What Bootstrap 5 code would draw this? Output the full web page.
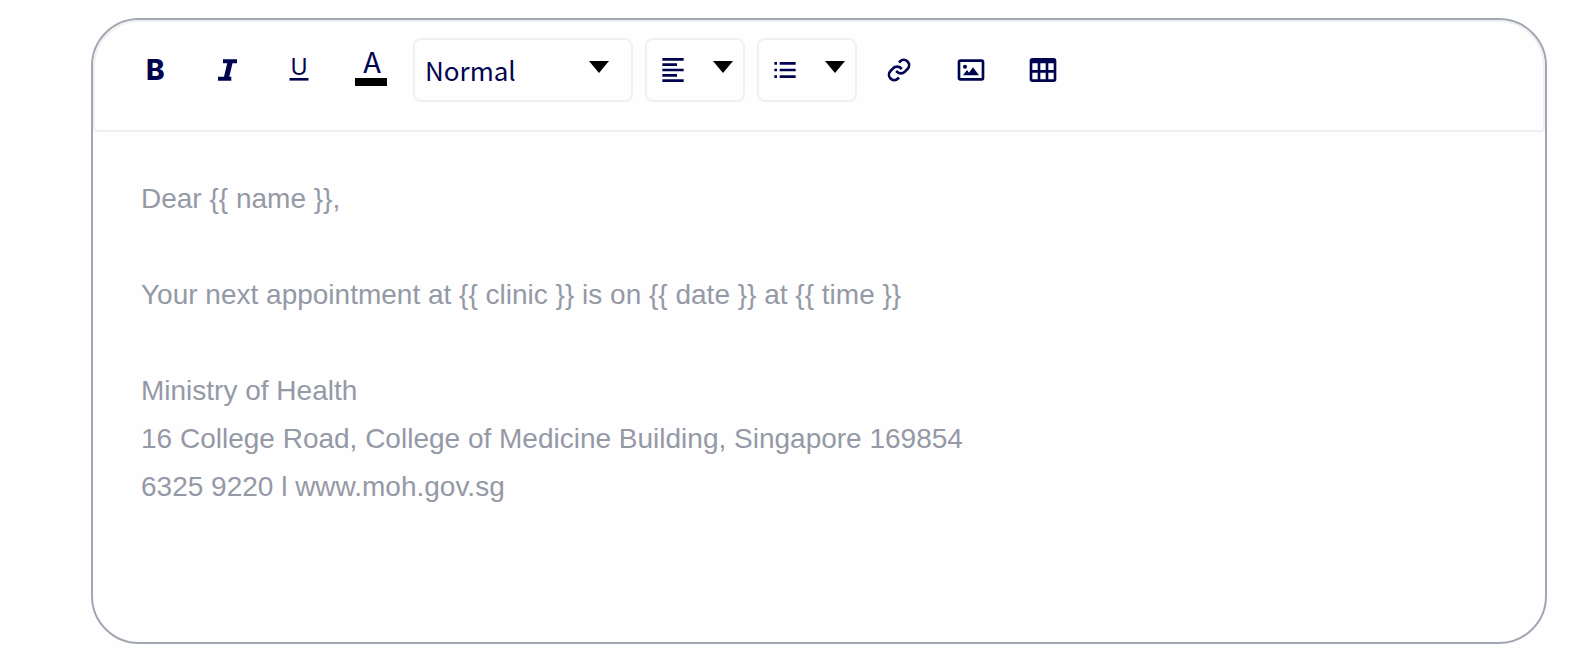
<!DOCTYPE html>
<html lang="en">
<head>
<meta charset="utf-8">
<meta name="viewport" content="width=device-width, initial-scale=1">
<title>Message template editor</title>
<link href="https://cdn.jsdelivr.net/npm/bootstrap@5.3.0/dist/css/bootstrap.min.css" rel="stylesheet">
<style>
  :root { --ink: #00044f; --hairline: #f0f0f0; --outline: #a0a7b3; }
  body { background: #fefefe; font-family: "Liberation Sans", Arial, sans-serif; }
  .editor-page { padding: 18px 39px 10px 91px; }
  .editor { border: 2px solid var(--outline); border-radius: 48px; overflow: hidden; background: #fefefe; }
  .editor-toolbar { gap: 12px; padding: 16px 30px 28px; border: 2px solid var(--hairline); border-radius: 46px 46px 4px 4px; color: var(--ink); }
  .tool { width: 60px; height: 64px; color: inherit; }
  .picker { height: 64px; border: 2px solid var(--hairline); border-radius: 8px; color: inherit; background: #fefefe; }
  .picker-style { width: 220px; padding: 0 10px; font: 26px/40px "Noto Sans CJK JP", "Noto Sans", sans-serif; appearance: none; }
  .picker-icon { width: 100px; padding: 0 10px; }
  .caret { width: 20px; height: 12px; fill: #000; margin-bottom: 6px; }
  .caret-over { right: 24px; top: 23px; pointer-events: none; }
  .tool svg, .picker-icon svg { flex: none; }
  .glyph-heavy { font: 800 28px Inter, sans-serif; }
  .glyph-under { font: 400 23px Inter, sans-serif; }
  .glyph-color { font: 400 29px "Noto Sans CJK JP", sans-serif; }
  .editor-text { padding: 43px 48px 35px; border: 0; outline: 0; resize: none; background: transparent; color: #9599a6; font-size: 28px; line-height: 48px; }
</style>
</head>
<body>
<main class="editor-page">
  <div class="editor">
    <div class="editor-toolbar d-flex flex-wrap" role="toolbar" aria-label="Formatting">
      <button type="button" class="tool btn border-0 p-0 d-flex align-items-center justify-content-center" aria-label="Bold">
        <svg width="60" height="64" fill="currentColor"><text class="glyph-heavy" x="21" y="42">B</text></svg>
      </button>
      <button type="button" class="tool btn border-0 p-0 d-flex align-items-center justify-content-center" aria-label="Italic">
        <svg width="40" height="40" fill="currentColor"><path d="M16 9.300h14v4h-4.500l-3.200 13.400h2v4H11v-4h6l3.200-13.400H16z"/></svg>
      </button>
      <button type="button" class="tool btn border-0 p-0 d-flex align-items-center justify-content-center" aria-label="Underline">
        <svg width="60" height="64" fill="currentColor"><text class="glyph-under" x="30" y="37" text-anchor="middle">U</text><rect x="20.500" y="40" width="19" height="2.600"/></svg>
      </button>
      <button type="button" class="tool btn border-0 p-0 d-flex align-items-center justify-content-center" aria-label="Text colour">
        <svg width="60" height="64" fill="currentColor"><text class="glyph-color" x="31" y="35" text-anchor="middle">A</text><rect x="14" y="40" width="32" height="8" fill="#000"/></svg>
      </button>
      <div class="position-relative">
        <select class="picker picker-style" aria-label="Paragraph style"><option>Normal</option><option>Heading 1</option><option>Heading 2</option></select>
        <svg class="caret caret-over position-absolute" viewBox="0 0 20 12"><path d="M0 0h20L10 12z"/></svg>
      </div>
      <button type="button" class="picker picker-icon d-flex align-items-center justify-content-between" aria-label="Alignment">
        <svg width="32" height="32" viewBox="0 0 24 24" fill="currentColor"><path d="M4 3h16v2H4zM4 7h11v2H4zM4 11h16v2H4zM4 15h11v2H4zM4 19h16v2H4z"/></svg>
        <svg class="caret" viewBox="0 0 20 12"><path d="M0 0h20L10 12z"/></svg>
      </button>
      <button type="button" class="picker picker-icon d-flex align-items-center justify-content-between" aria-label="List">
        <svg width="32" height="32" viewBox="0 0 24 24" fill="currentColor"><path d="M4 6h2v2H4zM4 11h2v2H4zM4 16h2v2H4zM8 6h12v2H8zM8 11h12v2H8zM8 16h12v2H8z"/></svg>
        <svg class="caret" viewBox="0 0 20 12"><path d="M0 0h20L10 12z"/></svg>
      </button>
      <button type="button" class="tool btn border-0 p-0 d-flex align-items-center justify-content-center" aria-label="Insert link">
        <svg width="32" height="32" viewBox="0 0 24 24" fill="currentColor"><path d="M8.465 11.293c1.133-1.133 3.109-1.133 4.242 0l.707.707 1.414-1.414-.707-.707c-.943-.944-2.199-1.465-3.535-1.465s-2.592.521-3.535 1.465L4.929 12a5.008 5.008 0 0 0 0 7.071 4.983 4.983 0 0 0 3.535 1.462A4.982 4.982 0 0 0 12 19.071l.707-.707-1.414-1.414-.707.707a3.007 3.007 0 0 1-4.243 0 3.005 3.005 0 0 1 0-4.243l2.122-2.121z"/><path d="m12 4.929-.707.707 1.414 1.414.707-.707a3.007 3.007 0 0 1 4.243 0 3.005 3.005 0 0 1 0 4.243l-2.122 2.121c-1.133 1.133-3.109 1.133-4.242 0L10.586 12l-1.414 1.414.707.707c.943.944 2.199 1.465 3.535 1.465s2.592-.521 3.535-1.465L19.071 12a5.008 5.008 0 0 0 0-7.071 5.006 5.006 0 0 0-7.071 0z"/></svg>
      </button>
      <button type="button" class="tool btn border-0 p-0 d-flex align-items-center justify-content-center" aria-label="Insert image">
        <svg width="32" height="32" viewBox="0 0 24 24" fill="currentColor"><path fill-rule="evenodd" d="M4 4h16a2 2 0 0 1 2 2v12a2 2 0 0 1-2 2H4a2 2 0 0 1-2-2V6a2 2 0 0 1 2-2zm0 2v12h16V6z"/><circle cx="7.500" cy="9.500" r="1.500"/><path d="m10.500 14-1.500-2-3 4h12l-4.500-6z"/></svg>
      </button>
      <button type="button" class="tool btn border-0 p-0 d-flex align-items-center justify-content-center" aria-label="Insert table">
        <svg width="32" height="32" viewBox="0 0 24 24" fill="currentColor"><path fill-rule="evenodd" d="M4 3h16a2 2 0 0 1 2 2v14a2 2 0 0 1-2 2H4a2 2 0 0 1-2-2V5a2 2 0 0 1 2-2zm0 4v5h4V7zm6 0v5h4V7zm6 0v5h4V7zM4 14v5h4v-5zm6 0v5h4v-5zm6 0v5h4v-5z"/></svg>
      </button>
    </div>
    <textarea class="editor-text d-block w-100" rows="9" aria-label="Message" spellcheck="false">Dear {{ name }},

Your next appointment at {{ clinic }} is on {{ date }} at {{ time }}

Ministry of Health
16 College Road, College of Medicine Building, Singapore 169854
6325 9220 l www.moh.gov.sg</textarea>
  </div>
</main>
<script src="https://cdn.jsdelivr.net/npm/bootstrap@5.3.0/dist/js/bootstrap.bundle.min.js"></script>
</body>
</html>
